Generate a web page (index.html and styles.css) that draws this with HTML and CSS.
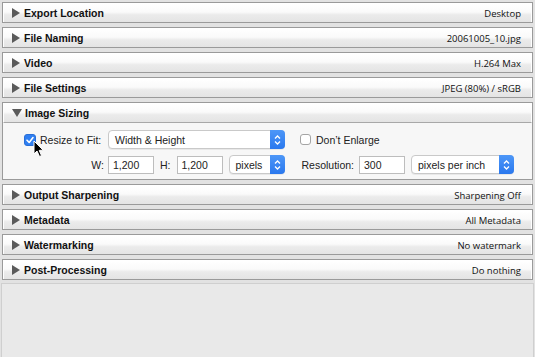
FILE: index.html
```html
<!DOCTYPE html>
<html>
<head>
<meta charset="utf-8">
<link rel="stylesheet" href="styles.css">
</head>
<body>
<div class="panel">
  <div class="section"><div class="head"><span class="tri"></span><span class="title">Export Location</span><span class="value">Desktop</span></div></div>
  <div class="section"><div class="head"><span class="tri"></span><span class="title">File Naming</span><span class="value">20061005_10.jpg</span></div></div>
  <div class="section"><div class="head"><span class="tri"></span><span class="title">Video</span><span class="value">H.264 Max</span></div></div>
  <div class="section"><div class="head"><span class="tri"></span><span class="title">File Settings</span><span class="value">JPEG (80%) / sRGB</span></div></div>
  <div class="section open">
    <div class="head"><span class="tri down"></span><span class="title">Image Sizing</span></div>
    <div class="body">
      <div class="row">
        <div class="lead">
          <span class="check on"><svg width="10" height="10" viewBox="0 0 10 10"><path d="M2 5.2 L4.2 7.4 L8 2.6" fill="none" stroke="#fff" stroke-width="1.6" stroke-linecap="round" stroke-linejoin="round"/></svg></span>
          <span class="lbl">Resize to Fit:</span>
          <svg class="cursor" width="12" height="18" viewBox="0 0 12 18"><path d="M1 1 L1 14 L4 11 L6.5 16.5 L8.5 15.6 L6.2 10.4 L10.2 10.2 Z" fill="#000" stroke="#fff" stroke-width="1"/></svg>
        </div>
        <div class="popup w177"><span>Width &amp; Height</span><span class="step"><svg width="9" height="12" viewBox="0 0 9 12"><path d="M2 4.5 L4.5 2 L7 4.5 M2 7.5 L4.5 10 L7 7.5" fill="none" stroke="#fff" stroke-width="1.3"/></svg></span></div>
        <span class="check"></span>
        <span class="lbl">Don’t Enlarge</span>
      </div>
      <div class="row">
        <div class="lead right"><span class="lbl">W:</span></div>
        <div class="input w46">1,200</div>
        <span class="lbl h">H:</span>
        <div class="input w46">1,200</div>
        <div class="popup w56"><span>pixels</span><span class="step"><svg width="9" height="12" viewBox="0 0 9 12"><path d="M2 4.5 L4.5 2 L7 4.5 M2 7.5 L4.5 10 L7 7.5" fill="none" stroke="#fff" stroke-width="1.3"/></svg></span></div>
        <span class="lbl res">Resolution:</span>
        <div class="input w46">300</div>
        <div class="popup w103"><span>pixels per inch</span><span class="step"><svg width="9" height="12" viewBox="0 0 9 12"><path d="M2 4.5 L4.5 2 L7 4.5 M2 7.5 L4.5 10 L7 7.5" fill="none" stroke="#fff" stroke-width="1.3"/></svg></span></div>
      </div>
    </div>
  </div>
  <div class="section"><div class="head"><span class="tri"></span><span class="title">Output Sharpening</span><span class="value">Sharpening Off</span></div></div>
  <div class="section"><div class="head"><span class="tri"></span><span class="title">Metadata</span><span class="value">All Metadata</span></div></div>
  <div class="section"><div class="head"><span class="tri"></span><span class="title">Watermarking</span><span class="value">No watermark</span></div></div>
  <div class="section"><div class="head"><span class="tri"></span><span class="title">Post-Processing</span><span class="value">Do nothing</span></div></div>
  <div class="rest"></div>
</div>
</body>
</html>
```
FILE: styles.css
```css
html, body {
  margin: 0;
  padding: 0;
  height: 100%;
}
body {
  background: #e2e2e2;
  font-family: "Liberation Sans", Arial, sans-serif;
  color: #1a1a1a;
}
.panel {
  display: flex;
  flex-direction: column;
  gap: 4px;
  padding: 2px 2px 0 2px;
  height: 100%;
  box-sizing: border-box;
}
.section {
  border: 1px solid #9a9a9a;
  box-shadow: inset 0 0 0 1px #fdfdfd;
  background: #f6f6f6;
}
.head {
  height: 19px;
  display: flex;
  align-items: center;
  padding: 0 10px 0 8px;
  background: linear-gradient(#ffffff 0%, #fafafa 45%, #ebebeb 60%, #e4e4e4 100%);
  border: 1px solid #fff;
  border-width: 1px 1px 0 1px;
  box-sizing: border-box;
}
.open .head {
  border-bottom: 1px solid #a8a8a8;
  height: 20px;
}
.tri {
  width: 0;
  height: 0;
  border-top: 5px solid transparent;
  border-bottom: 5px solid transparent;
  border-left: 8px solid #5a5a5a;
  margin-right: 4px;
  margin-left: 0px;
}
.tri.down {
  border-left: 5px solid transparent;
  border-right: 5px solid transparent;
  border-top: 8px solid #5a5a5a;
  border-bottom: 0;
  margin-right: 3px;
}
.title {
  font-weight: bold;
  font-size: 10.5px;
  color: #111;
  flex: 1;
}
.value {
  font-family: "Open Sans", sans-serif;
  font-size: 9.5px;
  color: #111;
}
.body {
  padding: 7px 0 5px 0;
  display: flex;
  flex-direction: column;
  gap: 6px;
  background: #f7f7f7;
}
.row {
  display: flex;
  align-items: center;
  height: 19px;
  font-size: 10.5px;
}
.lead {
  width: 105px;
  display: flex;
  align-items: center;
  padding-left: 21px;
  box-sizing: border-box;
  position: relative;
}
.lead.right {
  justify-content: flex-end;
  padding-right: 4px;
}
.check {
  width: 11px;
  height: 11px;
  border: 1px solid #a5a5a5;
  border-radius: 3px;
  background: #fff;
  box-sizing: border-box;
  display: inline-flex;
  align-items: center;
  justify-content: center;
  margin: 0 5px 0 15px;
}
.lead .check {
  margin: 0 4px 0 0;
}
.check.on {
  background: #2f7ff2;
  border-color: #2a6fd6;
  width: 12px;
  height: 12px;
}
.lbl {
  color: #222;
  white-space: nowrap;
}
.cursor {
  position: absolute;
  left: 30px;
  top: 6px;
}
.popup {
  height: 19px;
  background: #fff;
  border: 1px solid #c9c9c9;
  border-radius: 4px;
  box-sizing: border-box;
  display: flex;
  align-items: center;
  justify-content: space-between;
  padding-left: 6px;
  box-shadow: 0 1px 0 rgba(0,0,0,0.06);
  color: #222;
}
.step {
  width: 15px;
  height: 19px;
  margin: -1px -1px -1px 0;
  background: linear-gradient(#4d97f8, #2a78ee);
  border-radius: 0 4px 4px 0;
  display: flex;
  align-items: center;
  justify-content: center;
}
.w177 { width: 177px; }
.w56 { width: 56px; margin-left: 6px; }
.w103 { width: 103px; margin-left: 6px; }
.input {
  height: 18px;
  background: #fff;
  border: 1px solid #bdbdbd;
  box-sizing: border-box;
  padding-left: 4px;
  display: flex;
  align-items: center;
  color: #222;
}
.w46 { width: 46px; }
.h { margin: 0 6px 0 6px; }
.res { margin: 0 5px 0 17px; }
.rest {
  flex: 1;
  border: 1px solid #cfcfcf;
  border-bottom: 0;
  background: #e9e9e9;
  margin: -1px -1px 0 -1px;
}
```
